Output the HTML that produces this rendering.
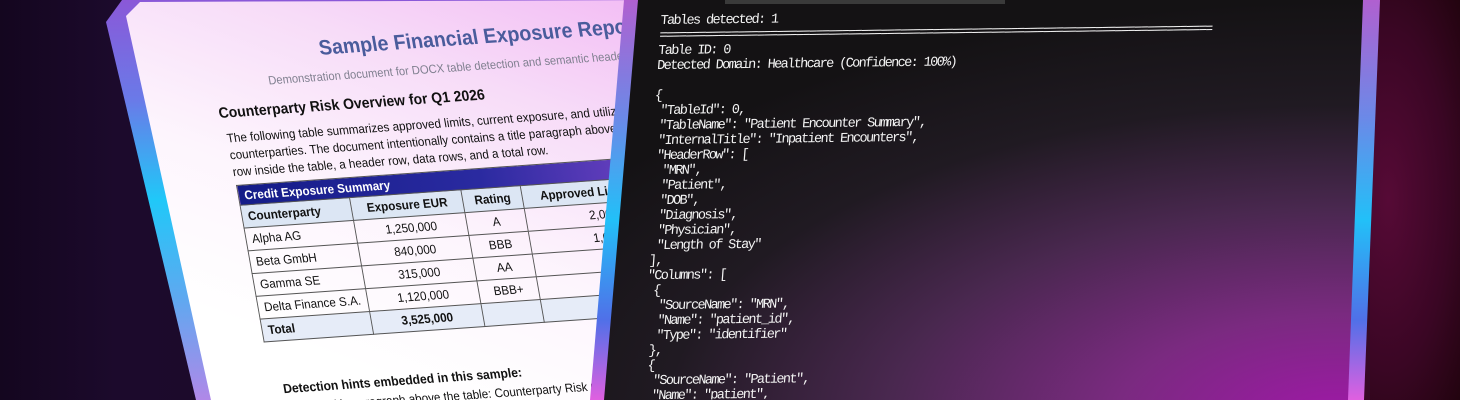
<!DOCTYPE html>
<html style="width:1460px;height:400px;overflow:hidden"><head><meta charset="utf-8"><style>
*{margin:0;padding:0;box-sizing:border-box}
body{width:1460px;height:400px;overflow:hidden;position:relative;background:linear-gradient(90deg,#14061f 0%,#1c0a2c 8%,#1a0826 40%,#2a0620 85%,#3a0828 93%,#1e0414 100%);font-family:"Liberation Sans",sans-serif}
.abs{position:absolute}
#bgR{left:1370px;top:0;width:90px;height:400px;background:radial-gradient(ellipse at 20% 50%,#560a36 0%,#3a0624 60%,#22040f 100%)}
#lframe{left:0;top:0;width:700px;height:400px;clip-path:polygon(106px 22px,122px 0,660px 0,620px 400px,196px 400px);background:linear-gradient(180deg,#8a58d8 0%,#6a7ae8 25%,#20c8f8 50%,#60a8f0 75%,#b088e8 100%)}
#paper{left:0;top:0;width:700px;height:400px;clip-path:polygon(126px 16px,140px 2px,660px 0,620px 400px,211px 400px);background:linear-gradient(200deg,#f2b8f4 0%,#f7dcf8 25%,#fdf5fd 50%,#ffffff 75%)}
#wrap{left:0;top:0;width:700px;height:400px;overflow:hidden;clip-path:polygon(126px 16px,140px 2px,660px 0,620px 400px,211px 400px)}
#doc{left:0;top:0;width:700px;height:400px;transform-origin:236px 185px;transform:rotate(-4deg) skewX(6deg) scaleX(0.93);color:#111}
#doc .t{position:absolute;white-space:nowrap}
table{border-collapse:collapse;font-size:12.5px}
td{border:1px solid #555;height:23px;padding:0 6px}
#term{left:0;top:0;width:1460px;height:400px;clip-path:polygon(624px 0,1380px 0,1364px 400px,590px 400px);background:linear-gradient(180deg,#b060d0 0%,#6a8ae8 30%,#22c0f8 55%,#5070e8 80%,#e060e0 100%)}
#tin{left:0;top:0;width:1460px;height:400px;clip-path:polygon(638px 0,1363px 0,1348px 400px,604px 400px);background:radial-gradient(ellipse 900px 420px at 1340px 420px,#a018a8 0%,#7a2a80 25%,#4a2850 50%,#201a22 75%,#141214 100%)}
#tt{left:661px;top:14px;height:386px;overflow:hidden;transform-origin:0 0;transform:rotate(-0.7deg) skewX(-5deg);color:#f4f4f4;font-family:"Liberation Mono",monospace;font-size:13.5px;line-height:15px;white-space:pre;letter-spacing:-1.6px}
</style></head><body>
<div class="abs" id="bgR"></div>
<div class="abs" id="lframe"></div>
<div class="abs" id="paper"></div>
<div class="abs" id="wrap">
<div class="abs" id="doc">
 <div class="t" style="left:350px;top:43px;font-size:21px;font-weight:bold;color:#4a5c9c">Sample Financial Exposure Report</div>
 <div class="t" style="left:290px;top:76px;font-size:12px;color:#808090">Demonstration document for DOCX table detection and semantic header analysis</div>
 <div class="t" style="left:231px;top:104px;font-size:15px;font-weight:bold">Counterparty Risk Overview for Q1 2026</div>
 <div class="t" style="left:235px;top:130px;font-size:12.5px;line-height:17px">The following table summarizes approved limits, current exposure, and utilization for<br>counterparties. The document intentionally contains a title paragraph above the table, a title<br>row inside the table, a header row, data rows, and a total row.</div>
 <div class="t" style="left:236px;top:185px">
 <table>
 <tr><td colspan="4" style="background:linear-gradient(90deg,#141c88,#2a2aa0 60%,#6a40c0);color:#fff;font-weight:bold;height:20px">Credit Exposure Summary</td></tr>
 <tr style="background:#dce6f4;font-weight:bold"><td style="width:118px">Counterparty</td><td style="width:120px;text-align:center">Exposure EUR</td><td style="width:64px;text-align:center">Rating</td><td style="width:130px;text-align:center">Approved Limit</td></tr>
 <tr><td>Alpha AG</td><td style="text-align:center">1,250,000</td><td style="text-align:center">A</td><td style="text-align:right">2,000,000</td></tr>
 <tr><td>Beta GmbH</td><td style="text-align:center">840,000</td><td style="text-align:center">BBB</td><td style="text-align:right">1,000,000</td></tr>
 <tr><td>Gamma SE</td><td style="text-align:center">315,000</td><td style="text-align:center">AA</td><td style="text-align:right">750,000</td></tr>
 <tr><td>Delta Finance S.A.</td><td style="text-align:center">1,120,000</td><td style="text-align:center">BBB+</td><td style="text-align:right">1,500,000</td></tr>
 <tr style="background:#e6ecf8;font-weight:bold"><td>Total</td><td style="text-align:center">3,525,000</td><td></td><td style="text-align:right">5,250,000</td></tr>
 </table></div>
 <div class="t" style="left:248px;top:384px;font-size:13px;font-weight:bold">Detection hints embedded in this sample:</div>
 <div class="t" style="left:285px;top:404px;font-size:12.5px">• Title paragraph above the table: Counterparty Risk Overview</div>
</div>
</div>
<div class="abs" id="term"></div>
<div class="abs" id="tin"></div>
<div class="abs" style="left:725px;top:0;width:280px;height:4px;background:#3a3a3a"></div>
<div class="abs" id="tt">Tables detected: 1
=====================================================================================
Table ID: 0
Detected Domain: Healthcare (Confidence: 100%)

{
 "TableId": 0,
 "TableName": "Patient Encounter Summary",
 "InternalTitle": "Inpatient Encounters",
 "HeaderRow": [
  "MRN",
  "Patient",
  "DOB",
  "Diagnosis",
  "Physician",
  "Length of Stay"
 ],
 "Columns": [
  {
   "SourceName": "MRN",
   "Name": "patient_id",
   "Type": "identifier"
  },
  {
   "SourceName": "Patient",
   "Name": "patient",</div>
</body></html>
